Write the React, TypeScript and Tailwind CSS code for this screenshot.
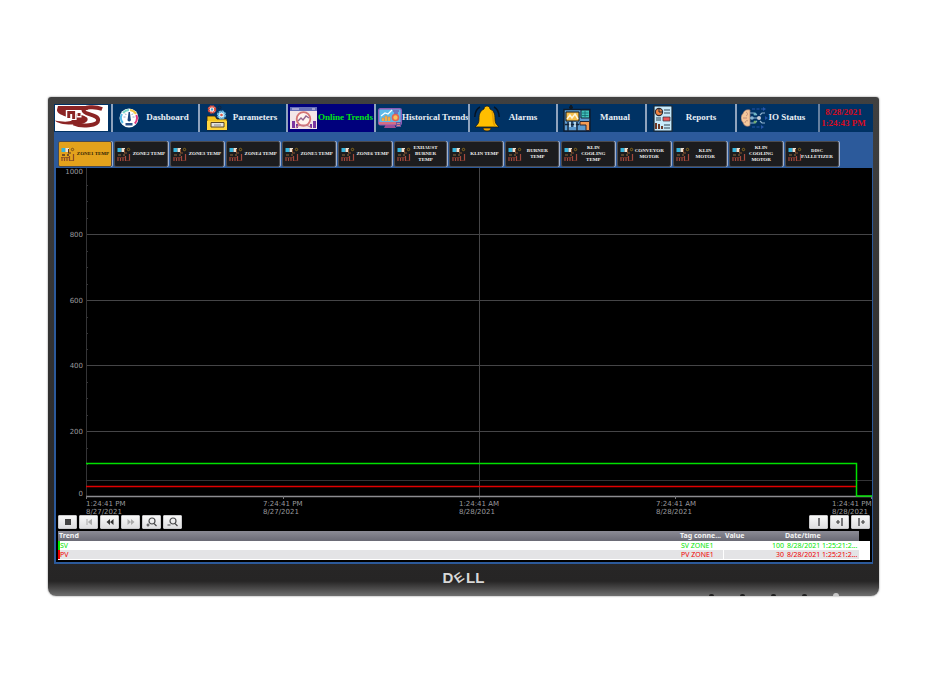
import React from 'react';

type IconProps = { className?: string };

const BrandLogo = () => (
  <svg viewBox="0 0 54 26" className="h-[26px] w-full bg-white" preserveAspectRatio="none" role="img" aria-label="Company logo">
    <path d="M3 1h42c-6 1-11 2-12 4H12c1 3 18 4 21 8 2 5-7 7-16 6.500C8 19.500 2 18 0 15.500c7 1.500 15 1.500 17 0C19 12 2 11 2 5z" fill="#8b2424" />
    <path d="M48 4C40 1 29 2 29 5.500C29 9.500 44 9.500 44 15C44 21 27 22 19 18.500" fill="none" stroke="#8b2424" strokeWidth="4" />
    <path d="M11 5h11v10H11z" fill="#fff" />
    <path d="M12.500 6h8v8h-3V9h-2v4h-3z" fill="#8b2424" />
    <path d="M22 6.500h5v6h-5z" fill="#fff" />
    <path d="M23 8h3v3h-3z" fill="#8b2424" />
  </svg>
);

const GaugeIcon = ({ className }: IconProps) => (
  <svg viewBox="0 0 20 20" className={className} aria-hidden="true">
    <circle cx="10" cy="10" r="9.500" fill="#fff" />
    <path d="M3.800 15A8 8 0 0 1 3 6" fill="none" stroke="#55bce8" strokeWidth="2" />
    <path d="M4 5a8 8 0 0 1 6-3" fill="none" stroke="#79d7c7" strokeWidth="2" />
    <path d="M11 2a8 8 0 0 1 6 4" fill="none" stroke="#f4c542" strokeWidth="2" />
    <path d="M17.300 7a8 8 0 0 1-1.500 8.500" fill="none" stroke="#e2397e" strokeWidth="2" />
    <path d="M9.600 4h1.300l.8 7a1.700 1.700 0 1 1-3 0z" fill="#17467e" />
    <path d="M6.500 15h7v2.500h-7z" fill="#294f88" />
    <path d="M4.500 9h2M13.500 9h2M6 5.500l1.300 1.500M14 5.500l-1.300 1.500" stroke="#6d93b9" strokeWidth=".8" />
  </svg>
);

const FolderGearIcon = ({ className }: IconProps) => (
  <svg viewBox="0 0 22 26" className={className} aria-hidden="true">
    <path d="M1 11h8l2 3h10v11H1z" fill="#f4c41d" stroke="#251f20" strokeWidth=".8" />
    <path d="M1 16h20v9H1z" fill="#ffd53f" />
    <path d="M5 17.500h13v4.500H5z" fill="#e5e3de" stroke="#584628" strokeWidth="1" />
    <path d="M8 20h7" stroke="#8c8c8c" />
    <circle cx="6" cy="4.500" r="3.200" fill="#fff" stroke="#df4938" strokeWidth="2.200" strokeDasharray="1.900 .6" />
    <circle cx="6" cy="4.500" r="1.200" fill="#4b9ccc" />
    <circle cx="15.500" cy="10" r="3.500" fill="#dff6ff" stroke="#63b3dd" strokeWidth="2.300" strokeDasharray="2 .7" />
    <circle cx="15.500" cy="10" r="1.300" fill="#d95a48" />
    <circle cx="13.500" cy="2.500" r="1.500" fill="none" stroke="#10243e" />
  </svg>
);

const OnlineIcon = ({ className }: IconProps) => (
  <svg viewBox="0 0 27 22" className={className} aria-hidden="true">
    <path d="M0 0h27v22H0z" fill="#f3e6e8" />
    <path d="M0 0h27v4H0z" fill="#6770b8" />
    <path d="M2 2h7M22 2h3" stroke="#e4d9ed" strokeWidth="1" />
    <path d="M2 14h3v7H2zM6 17h2v4H6zM20 17h2v4h-2zM23 14h3v7h-3z" fill="#7b36a0" />
    <circle cx="13.500" cy="12" r="6.800" fill="#fff4ef" stroke="#d57575" strokeWidth="1.800" />
    <path d="m8 14 3-3 2 2 3-4 3 2" fill="none" stroke="#93628f" strokeWidth="1.400" />
    <path d="M6 21c2-4 12-4 15 0" fill="none" stroke="#c57889" strokeWidth="1.200" />
  </svg>
);

const MonitorTrendIcon = ({ className }: IconProps) => (
  <svg viewBox="0 0 24 21" className={className} aria-hidden="true">
    <path d="M8 16h8l2 4H6z" fill="#a04d93" />
    <rect x=".7" y=".7" width="22.600" height="16" rx="1.500" fill="#5ebbea" stroke="#8d5bb3" strokeWidth="1.400" />
    <path d="M1 14h22v2.500H1z" fill="#d66d83" />
    <path d="M4 13v-3h2v3M7 13V8h2v5M10 13v-4h2v4" fill="#f8c14b" stroke="#e28036" strokeWidth=".6" />
    <path d="m3 8 4-3 3 1 4-4" fill="none" stroke="#fff" strokeWidth="1.200" />
    <circle cx="17.500" cy="9.500" r="3" fill="#f8c25b" stroke="#e26451" strokeWidth="1.600" />
    <path d="M15 3h6M16 5h4" stroke="#7a3390" strokeWidth="1" />
    <path d="M18 14h5v5h-5z" fill="#7154a2" />
    <path d="M19 15.500h3M19 17.500h3" stroke="#ed9680" strokeWidth=".8" />
  </svg>
);

const BellIcon = ({ className }: IconProps) => (
  <svg viewBox="0 0 26 27" className={className} aria-hidden="true">
    <path d="M6 2C2 4 1 7 .8 12M20 2c4 2 5 5 5.200 10" fill="none" stroke="#061321" strokeWidth="1.500" />
    <path d="M10 4c0-4 6-4 6 0 4 2 5 5 5 10 0 4 1 5 4 8H1c3-3 4-4 4-8 0-5 1-8 5-10z" fill="#ffbe00" stroke="#17191b" strokeWidth=".8" />
    <path d="M9 23h8c0 4-8 4-8 0z" fill="#f0a300" stroke="#251d0c" strokeWidth=".7" />
    <path d="M18 6c2 6 0 11 3 15" fill="none" stroke="#e39d00" strokeWidth="1.500" />
  </svg>
);

const MachineIcon = ({ className }: IconProps) => (
  <svg viewBox="0 0 28 27" className={className} aria-hidden="true">
    <path d="M8 5V0M6 2.500h4" stroke="#101820" strokeWidth="1.800" />
    <rect x="1" y="4.500" width="26" height="21.500" fill="#5d9bd0" stroke="#0d1b2d" strokeWidth="1.400" />
    <path d="M3 7h13v9H3z" fill="#f7c04e" stroke="#171719" />
    <path d="m4 14 3-4 2 3 3-4 3 5" fill="none" stroke="#fff5dc" strokeWidth="1.500" />
    <path d="M18 5h8.500v8H18z" fill="#43c5be" stroke="#142332" />
    <path d="M19 8h6.500M19 10.500h6.500M22 6v6" stroke="#12686f" strokeWidth=".8" />
    <path d="M5 26v-9M9 22v-6M14 26v-9M2 19.500h14" stroke="#13243a" strokeWidth="1.400" />
    <path d="M7 17v5M12 17v5" stroke="#d8edf8" strokeWidth="1.500" />
    <path d="M17 16.500h9.500v9H23V20h-6z" fill="#f69b52" stroke="#2c2630" strokeWidth="1" />
  </svg>
);

const ReportIcon = ({ className }: IconProps) => (
  <svg viewBox="0 0 20 27" className={className} aria-hidden="true">
    <rect x=".8" y=".8" width="18.400" height="25.400" rx="1" fill="#c8eafa" stroke="#142a3f" strokeWidth="1.600" />
    <circle cx="6" cy="7" r="3.600" fill="#f18442" stroke="#302c34" strokeWidth="1.100" />
    <path d="M6 7V3.500M6 7h3.500" stroke="#17293b" />
    <path d="M11 5h6M11 8h6M3 13h5M3 15h5M11 20h6M11 23h6" stroke="#2d4350" strokeWidth="1.200" />
    <path d="M10 12h7v4h-7z" fill="#e95656" stroke="#392c38" strokeWidth=".7" />
    <path d="M3 18v6M6 19v5M9 21v3" stroke="#6e3927" strokeWidth="2" />
  </svg>
);

const BrainIcon = ({ className }: IconProps) => (
  <svg viewBox="0 0 27 22" className={className} aria-hidden="true">
    <path d="M9 3C5 2 3 4 2 6.500c-3 3-2 7 0 9 1 4 5 4.500 7 3z" fill="#f5c79a" stroke="#9d7770" strokeWidth=".7" />
    <path d="M5 5c2 1 2 3 0 4M2 11h4M4 16c0-2 2-3 3-2" fill="none" stroke="#bd8979" strokeWidth=".9" />
    <path d="M11 2h12M11 20h10" stroke="#2756a8" strokeWidth="1.200" strokeDasharray="3 1.500" />
    <path d="M9 6h4l3 2M9 16h4l3-2M9 11h8M19 8l2-2h3M19 14l2 2h3" fill="none" stroke="#8db2cd" strokeWidth="1.200" />
    <path d="m22 0 3 2-3 2M20 18l3 2-3 2M24 9l3 2-3 2" fill="#2756a8" />
    <circle cx="14" cy="7" r="1.500" fill="#6db7c4" />
    <circle cx="18" cy="11" r="2" fill="#c5cbd5" />
    <circle cx="14" cy="15" r="1.500" fill="#71ac71" />
    <circle cx="11" cy="11" r="1.800" fill="#8ab5d1" />
  </svg>
);

const KilnIcon = ({ bright }: { bright: boolean }) => (
  <svg viewBox="0 0 14 14" className="mb-px h-[14px] w-[14px] shrink-0" aria-hidden="true">
    <path d="M.5 1h4v4h-4z" fill="#36b4dc" />
    <path d="M4.500 1h3.500v4H4.500z" fill="#eee3d4" />
    <path d="M7.500 2v4M10 6H7" stroke={bright ? '#503324' : '#8b5430'} strokeWidth="1" />
    <circle cx="11.500" cy="2.500" r="1.200" fill="none" stroke={bright ? '#77501a' : '#8c6b1d'} />
    <path d="M1 7h3v2H1M6 7h2v2H6" fill={bright ? '#765021' : '#57452d'} />
    <path d="M1 14v-4M3.500 14v-3M6 14v-4M8.500 14v-5M12.500 14V7" stroke={bright ? '#8d4a24' : '#a4493d'} strokeWidth="1.200" />
    <path d="M0 10.500h8M9 13.500h4" stroke={bright ? '#864f25' : '#703329'} strokeWidth=".8" />
  </svg>
);

const navItems = [
  { label: 'Dashboard', Icon: GaugeIcon, icon: 'ml-[6px] h-[20px] w-[20px]', pad: 'pr-[2px]' },
  { label: 'Parameters', Icon: FolderGearIcon, icon: 'ml-[6px] h-[26px] w-[22px]', pad: 'pr-[4px]' },
  { label: 'Online Trends', Icon: OnlineIcon, icon: 'ml-[2px] h-[22px] w-[27px]', pad: '' },
  { label: 'Historical Trends', Icon: MonitorTrendIcon, icon: 'ml-[2px] h-[21px] w-[24px]', pad: '' },
  { label: 'Alarms', Icon: BellIcon, icon: 'ml-[4px] h-[27px] w-[26px]', pad: 'pr-[10px]' },
  { label: 'Manual', Icon: MachineIcon, icon: 'ml-[5px] h-[27px] w-[28px]', pad: 'pr-[6px]' },
  { label: 'Reports', Icon: ReportIcon, icon: 'ml-[6px] h-[27px] w-[20px]', pad: 'pr-[6px]' },
  { label: 'IO Status', Icon: BrainIcon, icon: 'ml-[4px] h-[22px] w-[27px]', pad: 'pr-[12px]' },
];

const tabs = [
  'ZONE1 TEMP', 'ZONE2 TEMP', 'ZONE3 TEMP', 'ZONE4 TEMP', 'ZONE5 TEMP', 'ZONE6 TEMP',
  'EXHAUST BURNER TEMP', 'KLIN TEMP', 'BURNER TEMP', 'KLIN COOLING TEMP',
  'CONVEYOR MOTOR', 'KLIN MOTOR', 'KLIN COOLING MOTOR', 'DISC PALLETIZER',
];

const singleLine = (label: string) => label.startsWith('ZONE') || label === 'KLIN TEMP';

const timeLabels = [
  ['1:24:41 PM', '8/27/2021'],
  ['7:24:41 PM', '8/27/2021'],
  ['1:24:41 AM', '8/28/2021'],
  ['7:24:41 AM', '8/28/2021'],
  ['1:24:41 PM', '8/28/2021'],
];

const minorTicks = [17, 33, 50, 83, 99, 116, 149, 165, 181, 214, 230, 247, 280, 296];
const gridLines = [66, 132, 197, 263];

const Header = () => (
  <header className="grid h-[28px] grid-cols-[57fr_87fr_88fr_88fr_94fr_88fr_89fr_90fr_83fr_55fr] bg-[#003264] font-['Liberation_Serif',serif] text-[9px] font-bold text-[#e8eef4]">
    <div className="flex items-center pl-px pr-[3px]">
      <BrandLogo />
    </div>
    {navItems.map(({ label, Icon, icon, pad }) => {
      const active = label === 'Online Trends';
      return (
        <button
          key={label}
          type="button"
          className={`flex min-w-0 items-center border-l-2 border-[#8fa3bd] ${pad} ${active ? 'bg-[#00007c] text-[#00e414]' : ''}`}
        >
          <Icon className={`shrink-0 ${icon}`} />
          <span className="flex-1 whitespace-nowrap text-center">{label}</span>
        </button>
      );
    })}
    <time className="flex flex-col items-center justify-center border-l-2 border-[#6680a0] pr-[6px] leading-[11px] text-[#d80a20]">
      <span>8/28/2021</span>
      <span className="whitespace-nowrap">1:24:43 PM</span>
    </time>
  </header>
);

const TabBar = () => (
  <nav className="grid grid-cols-14 gap-[2px] pb-px pl-[4px] pr-[34px] pt-[9px] font-['Liberation_Serif',serif] text-[5px] font-bold leading-[6px]">
    {tabs.map((label, i) => {
      const single = singleLine(label);
      return (
        <button
          key={label}
          type="button"
          className={`flex h-[26px] min-w-0 items-center rounded-[2px] border border-[#4b4b4f] pl-[2px] shadow-[1px_0_0_#9fb0cf] ${single ? '' : 'pr-[6px]'} ${i === 0 ? 'bg-[#e3a21c] text-[#2b1c05]' : 'bg-[#1c1c1e] text-[#f0f0f0]'}`}
        >
          <KilnIcon bright={i === 0} />
          <span className="flex min-w-0 flex-1 flex-col items-center whitespace-nowrap">
            {single ? label : label.split(' ').map((word) => <span key={word}>{word}</span>)}
          </span>
        </button>
      );
    })}
  </nav>
);

const Chart = () => (
  <section aria-label="Zone 1 trend" className="font-['DejaVu_Sans',sans-serif] text-[7px] leading-[8px] text-[#9a9a9e]">
    <div className="flex">
      <div className="grid w-[30px] grid-rows-[63px_66px_65px_66px_62px_8px] pr-[3px] text-right">
        {[1000, 800, 600, 400, 200, 0].map((v) => <span key={v}>{v}</span>)}
      </div>
      <svg viewBox="0 0 786 331" preserveAspectRatio="none" className="h-[331px] min-w-0 flex-1">
        <g stroke="#454547" strokeWidth="1">
          {gridLines.map((y) => <path key={y} d={`M0 ${y}.5H786`} />)}
          <path d="M393.500 0V331" />
        </g>
        <g stroke="#343436" strokeWidth="1">
          <path d="M0 312.500H786M.5 0V328" />
          {minorTicks.map((y) => <path key={y} d={`M0 ${y}.5H2`} />)}
        </g>
        <path d="M0 328.500H786" stroke="#8c8c90" strokeWidth="1.500" />
        <path d="M.5 328v3M197.500 328v3M589.500 328v3M785.500 328v3" stroke="#77777b" />
        <path d="M0 318.500H770" stroke="#e00000" strokeWidth="1.500" />
        <path d="M0 295.500H770.500V328H786" fill="none" stroke="#00e000" strokeWidth="1.500" />
      </svg>
    </div>
    <div className="ml-[30px] grid h-[16px] grid-cols-[177fr_196fr_197fr_176fr_40fr] pt-px">
      {timeLabels.map(([time, date], i) => (
        <div key={i} className="flex min-w-0 flex-col whitespace-nowrap">
          <span>{time}</span>
          <span>{date}</span>
        </div>
      ))}
    </div>
  </section>
);

const ToolButton = ({ label, children }: { label: string; children: React.ReactNode }) => (
  <button type="button" aria-label={label} className="flex h-[14px] w-[19px] items-center justify-center rounded-[1px] border border-[#c9c9cb] bg-linear-to-b from-[#f8f8f8] to-[#dedee0]">
    <svg viewBox="0 0 12 10" className="h-[10px] w-[12px]" aria-hidden="true">{children}</svg>
  </button>
);

const Lens = ({ zoomIn }: { zoomIn: boolean }) => (
  <g fill="none" stroke="#4a4a4c" strokeWidth="1.200">
    <circle cx="6" cy="4" r="3" />
    <path d="m8 6.500 2.500 2.500M.5 8h3" />
    {zoomIn && <path d="M2 6.500v3" />}
  </g>
);

const Toolbar = () => (
  <div className="relative flex justify-between pl-[2px] pr-[2px]">
    <div className="flex gap-[2px]">
      <ToolButton label="Stop"><path d="M3 2h6v6H3z" fill="#444" /></ToolButton>
      <ToolButton label="First"><path d="M4 2v6M8.500 2.500 5.500 5l3 2.500z" fill="#aaa" stroke="#aaa" /></ToolButton>
      <ToolButton label="Back"><path d="M6 2v6L2.500 5zM9.500 2v6L6 5z" fill="#333" /></ToolButton>
      <ToolButton label="Forward"><path d="M2.500 2v6L6 5zM6 2v6l3.500-3z" fill="#aaa" /></ToolButton>
      <ToolButton label="Zoom in"><Lens zoomIn /></ToolButton>
      <ToolButton label="Zoom out"><Lens zoomIn={false} /></ToolButton>
    </div>
    <div className="flex gap-[2px]">
      <ToolButton label="Ruler"><path d="M5 1h2v8H5z" fill="#77777a" /></ToolButton>
      <ToolButton label="Ruler left"><path d="M7 1h2v8H7z" fill="#77777a" /><path d="M2 5h4M4 3v4" stroke="#444" strokeWidth="1.200" /></ToolButton>
      <ToolButton label="Ruler right"><path d="M3 1h2v8H3z" fill="#77777a" /><path d="M6 5h4M8 3v4" stroke="#444" strokeWidth="1.200" /></ToolButton>
    </div>
  </div>
);

const rows = [
  { name: 'SV', tag: 'SV ZONE1', value: 100, color: 'text-[#00e600]', bar: 'border-[#00ee00]', bg: 'bg-white' },
  { name: 'PV', tag: 'PV ZONE1', value: 30, color: 'text-[#f00000]', bar: 'border-[#f00000]', bg: 'bg-[#e4e4e6]' },
];

const TrendTable = () => (
  <div className="mt-[2px] pl-[2px] pr-[2px]">
    <table className="w-full table-fixed border-separate border-spacing-0 bg-white text-left font-['Noto_Sans',sans-serif] text-[7px] leading-[9px]">
      <colgroup>
        <col />
        <col className="w-[44px]" />
        <col className="w-[62px]" />
        <col className="w-[74px]" />
        <col className="w-[11px]" />
      </colgroup>
      <thead>
        <tr className="h-[10px] whitespace-nowrap align-top text-[#f4f4f4]">
          <th className="bg-linear-to-b from-[#8b8b95] to-[#6a6a75] p-0 pl-px">Trend</th>
          <th className="bg-linear-to-b from-[#8b8b95] to-[#6a6a75] p-0 pl-px">Tag conne...</th>
          <th className="bg-linear-to-b from-[#8b8b95] to-[#6a6a75] p-0 pl-[2px]">Value</th>
          <th className="bg-linear-to-b from-[#8b8b95] to-[#6a6a75] p-0">Date/time</th>
          <td className="bg-black p-0" />
        </tr>
      </thead>
      <tbody>
        {rows.map((r) => (
          <tr key={r.name} className={`whitespace-nowrap ${r.color}`}>
            <td className={`border-l-2 p-0 ${r.bar} ${r.bg}`}>{r.name}</td>
            <td className={`p-0 pl-[2px] ${r.bg}`}>{r.tag}</td>
            <td className={`border-l border-white p-0 pr-px text-right ${r.bg}`}>{r.value}</td>
            <td className={`p-0 pl-[2px] ${r.bg}`}>8/28/2021 1:25:21:2...</td>
            <td className="p-0" />
          </tr>
        ))}
      </tbody>
    </table>
    <div className="h-px bg-white" />
  </div>
);

const Chin = () => (
  <footer className="flex h-[32px] flex-col items-center justify-between">
    <div className="flex items-center pt-[5px] font-['Liberation_Sans',sans-serif] text-[15px] font-bold leading-[18px] text-[#d8d8d8]">
      <span>D</span>
      <span className="mx-[2px] -rotate-35 text-[13px] leading-[10px]">E</span>
      <span>LL</span>
    </div>
    <div className="flex w-full items-end justify-end gap-[26px] pr-[34px]">
      {[0, 1, 2, 3].map((i) => <span key={i} className="h-[2px] w-[5px] rounded-t-sm bg-[#202020]" />)}
      <span className="h-[3px] w-[6px] rounded-t-full bg-[#c8c8c8]" />
    </div>
  </footer>
);

export default function App() {
  return (
    <main className="min-h-screen bg-white px-[48px] pt-[97px]">
      <div className="rounded-t-[3px] rounded-b-[8px] bg-linear-to-b from-[#404040] from-0% via-[#262525] via-97% to-[#707070] to-100% px-[6px] pt-[7px] shadow-[0_0_2px_#777]">
        <div className="bg-[#2c5a9b] pb-[2px]">
          <Header />
          <TabBar />
          <div className="ml-[2px] mr-px bg-black pb-[2px]">
            <Chart />
            <Toolbar />
            <TrendTable />
          </div>
        </div>
        <Chin />
      </div>
    </main>
  );
}
